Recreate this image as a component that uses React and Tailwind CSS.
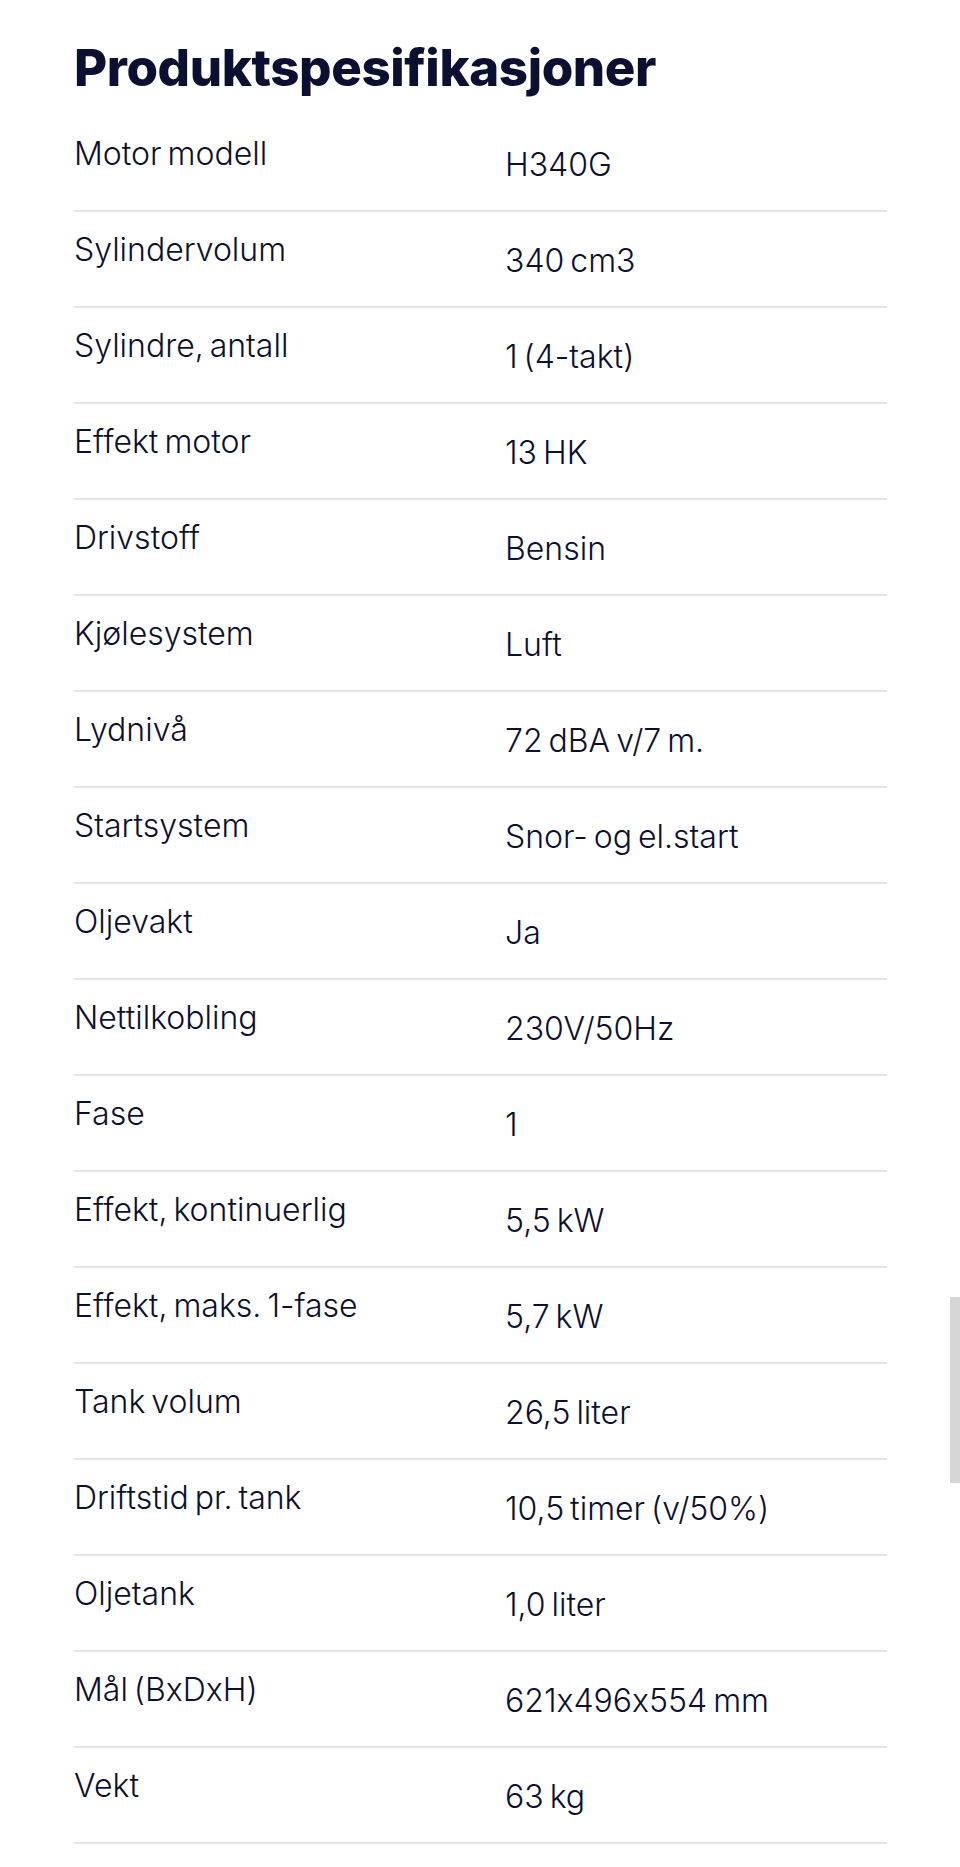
const specs = [
  ['Motor modell', 'H340G'],
  ['Sylindervolum', '340 cm3'],
  ['Sylindre, antall', '1 (4-takt)'],
  ['Effekt motor', '13 HK'],
  ['Drivstoff', 'Bensin'],
  ['Kjølesystem', 'Luft'],
  ['Lydnivå', '72 dBA v/7 m.'],
  ['Startsystem', 'Snor- og el.start'],
  ['Oljevakt', 'Ja'],
  ['Nettilkobling', '230V/50Hz'],
  ['Fase', '1'],
  ['Effekt, kontinuerlig', '5,5 kW'],
  ['Effekt, maks. 1-fase', '5,7 kW'],
  ['Tank volum', '26,5 liter'],
  ['Driftstid pr. tank', '10,5 timer (v/50%)'],
  ['Oljetank', '1,0 liter'],
  ['Mål (BxDxH)', '621x496x554 mm'],
  ['Vekt', '63 kg'],
]

export default function App() {
  return (
    <div className="relative min-h-[1867px] bg-white font-['Inter',sans-serif] text-[#0c1030] [font-feature-settings:'calt'_0]">
      <div className="pl-[74px] pr-[73px] pt-[36px]">
        <h1 className="text-[51px] font-extrabold leading-[64px] tracking-[-0.008em]">Produktspesifikasjoner</h1>
        <div className="mt-[16px]">
          {specs.map(([label, value]) => (
            <div key={label} className="flex h-[96px] border-b-2 border-[#e6e6e8] text-[32px] font-light leading-[36px] [word-spacing:-3px]">
              <div className="w-[431px] pt-[20px]">{label}</div>
              <div className="pt-[31px]">{value}</div>
            </div>
          ))}
        </div>
      </div>
      {/* scroll indicator */}
      <div className="absolute right-0 top-[1297px] h-[186px] w-[10px] bg-[#d6d6d6]" />
    </div>
  )
}
